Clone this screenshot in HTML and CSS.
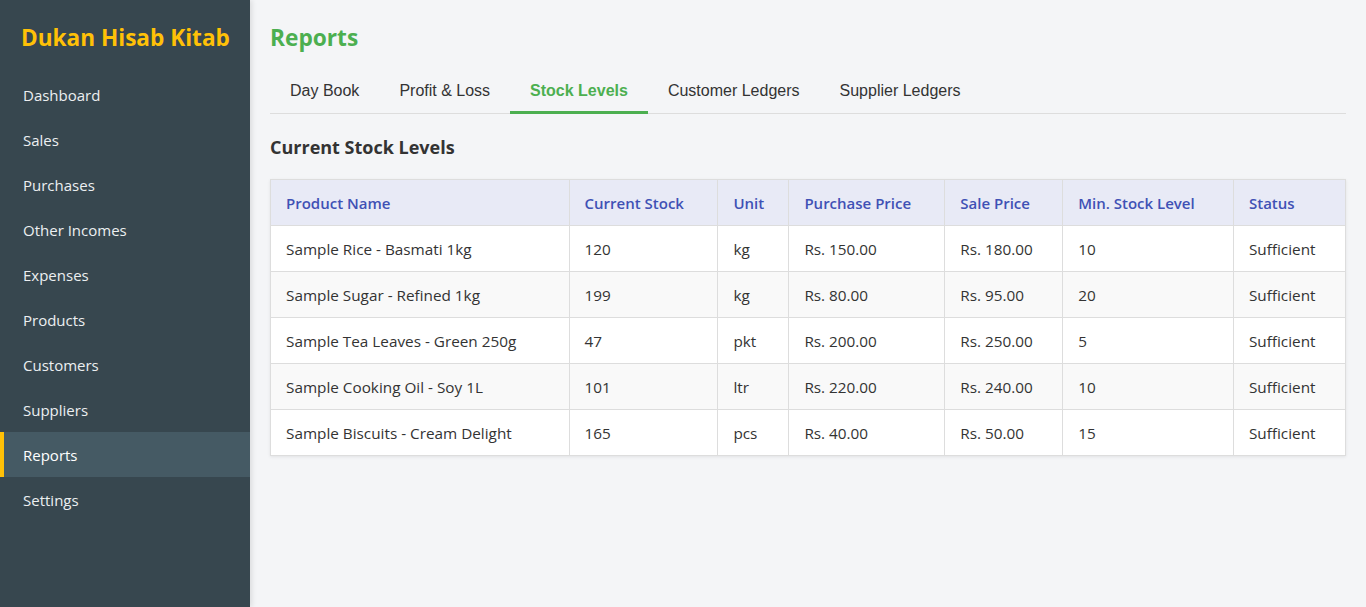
FILE: index.html
```html
<!DOCTYPE html>
<html>
<head>
<meta charset="utf-8">
<link rel="stylesheet" href="styles.css">
</head>
<body>
<div class="app">
  <aside class="sidebar">
    <h1 class="brand">Dukan Hisab Kitab</h1>
    <nav class="nav">
      <a class="nav-item">Dashboard</a>
      <a class="nav-item">Sales</a>
      <a class="nav-item">Purchases</a>
      <a class="nav-item">Other Incomes</a>
      <a class="nav-item">Expenses</a>
      <a class="nav-item">Products</a>
      <a class="nav-item">Customers</a>
      <a class="nav-item">Suppliers</a>
      <a class="nav-item active">Reports</a>
      <a class="nav-item">Settings</a>
    </nav>
  </aside>
  <main class="main">
    <h2 class="page-title">Reports</h2>
    <div class="tabs">
      <button class="tab">Day Book</button>
      <button class="tab">Profit &amp; Loss</button>
      <button class="tab active">Stock Levels</button>
      <button class="tab">Customer Ledgers</button>
      <button class="tab">Supplier Ledgers</button>
    </div>
    <h3 class="section-title">Current Stock Levels</h3>
    <table class="table">
      <colgroup>
        <col class="c1"><col class="c2"><col class="c3"><col class="c4"><col class="c5"><col class="c6"><col class="c7">
      </colgroup>
      <thead>
        <tr><th>Product Name</th><th>Current Stock</th><th>Unit</th><th>Purchase Price</th><th>Sale Price</th><th>Min. Stock Level</th><th>Status</th></tr>
      </thead>
      <tbody>
        <tr><td>Sample Rice - Basmati 1kg</td><td>120</td><td>kg</td><td>Rs. 150.00</td><td>Rs. 180.00</td><td>10</td><td>Sufficient</td></tr>
        <tr><td>Sample Sugar - Refined 1kg</td><td>199</td><td>kg</td><td>Rs. 80.00</td><td>Rs. 95.00</td><td>20</td><td>Sufficient</td></tr>
        <tr><td>Sample Tea Leaves - Green 250g</td><td>47</td><td>pkt</td><td>Rs. 200.00</td><td>Rs. 250.00</td><td>5</td><td>Sufficient</td></tr>
        <tr><td>Sample Cooking Oil - Soy 1L</td><td>101</td><td>ltr</td><td>Rs. 220.00</td><td>Rs. 240.00</td><td>10</td><td>Sufficient</td></tr>
        <tr><td>Sample Biscuits - Cream Delight</td><td>165</td><td>pcs</td><td>Rs. 40.00</td><td>Rs. 50.00</td><td>15</td><td>Sufficient</td></tr>
      </tbody>
    </table>
  </main>
</div>
</body>
</html>
```
FILE: styles.css
```css
* { box-sizing: border-box; }
html, body { margin: 0; height: 100%; }
body {
  font-family: "Segoe UI", "Open Sans", "Noto Sans", sans-serif;
  background: #f4f5f7;
  color: #333;
}
.app { display: flex; height: 607px; }
.sidebar {
  width: 250px;
  flex-shrink: 0;
  background: #37474f;
  color: #eceff1;
  box-shadow: 2px 0 5px rgba(0,0,0,0.1);
}
.brand {
  margin: 0;
  padding: 22px 0 18px 21px;
  font-size: 22.6px;
  line-height: 32px;
  font-weight: 700;
  color: #ffc107;
}
.nav { display: flex; flex-direction: column; }
.nav-item {
  display: block;
  height: 45px;
  padding-top: 2px;
  line-height: 43px;
  font-size: 15px;
  color: #eceff1;
  border-left: 4px solid transparent;
  padding-left: 19px;
}
.nav-item.active {
  background: #455a64;
  border-left-color: #ffc107;
  color: #fff;
}
.main { flex: 1; padding: 20px; }
.page-title {
  margin: 2px 0 0;
  font-size: 22.7px;
  line-height: 32px;
  font-weight: 700;
  color: #4caf50;
}
.tabs {
  display: flex;
  margin-top: 16px;
  border-bottom: 1px solid #ddd;
}
.tab {
  font-family: "Liberation Sans", Arial, sans-serif;
  font-size: 16px;
  line-height: 18px;
  color: #333;
  background: none;
  border: none;
  border-bottom: 3px solid transparent;
  padding: 12px 20px 11px;
  margin-bottom: -1px;
}
.tab.active {
  color: #4caf50;
  font-weight: 700;
  border-bottom-color: #4caf50;
}
.section-title {
  margin: 21px 0 20px;
  font-size: 18px;
  line-height: 24px;
  font-weight: 700;
  color: #333;
}
.table {
  width: 100%;
  border-collapse: collapse;
  background: #fff;
  box-shadow: 0 1px 3px rgba(0,0,0,0.08);
  font-size: 15.3px;
}
.c1 { width: 299px; }
.c2 { width: 149px; }
.c3 { width: 71px; }
.c4 { width: 156px; }
.c5 { width: 118px; }
.c6 { width: 171px; }
.c7 { width: 112px; }
.table th, .table td {
  border: 1px solid #ddd;
  padding: 0 15px;
  height: 46px;
  text-align: left;
}
.table th {
  background: #e8eaf6;
  color: #3f51b5;
  font-weight: 600;
  font-size: 15px;
}
.table tbody tr:nth-child(even) td { background: #f9f9f9; }
```
